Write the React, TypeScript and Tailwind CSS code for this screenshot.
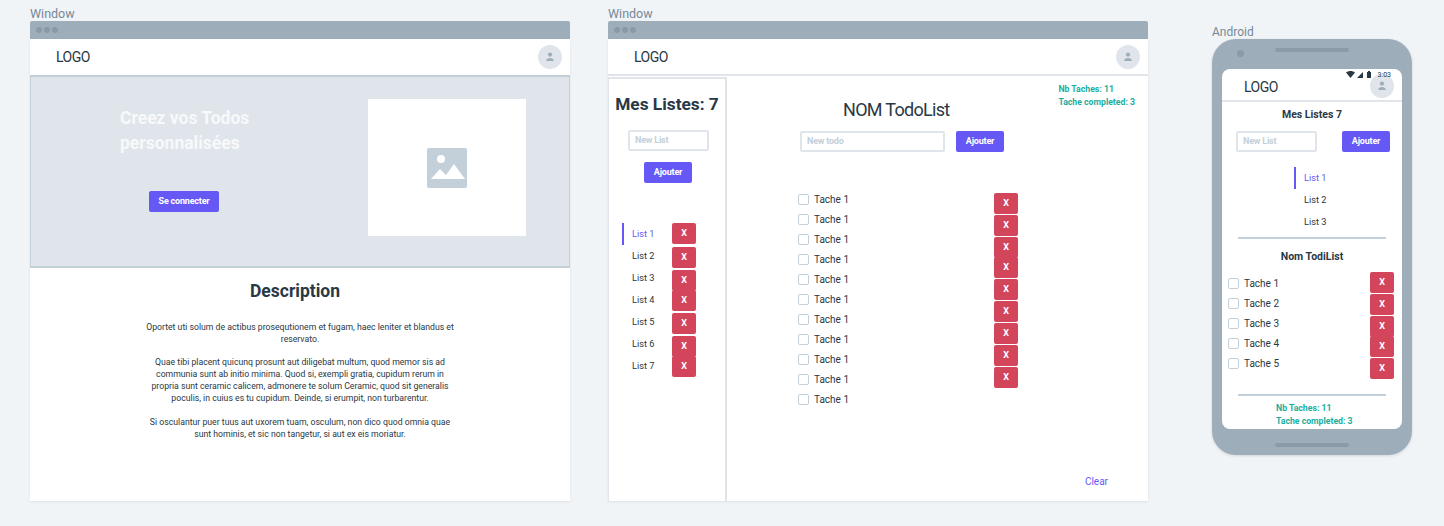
const font = "font-['Roboto',sans-serif]";

const listButtons = ["mt-0", "mt-[3px]", "mt-[2px]", "-mt-px", "mt-[2px]", "mt-[2px]", "-mt-px"];
const taskButtons = ["mt-0", "mt-px", "mt-px", "-mt-px", "mt-px", "mt-px", "mt-px", "mt-px", "mt-px"];
const phoneButtons = ["mt-0", "mt-px", "mt-px", "-mt-px", "mt-px"];

const Avatar = ({ className }: { className: string }) => (
  <div className={`flex h-6 w-6 items-center justify-center rounded-full bg-[#dfe5eb] ${className}`}>
    <svg viewBox="0 0 12 12" className="h-3 w-3 fill-[#9eadba]">
      <circle cx="6" cy="3.6" r="2.1" />
      <path d="M2.2 10c0-2 1.8-3 3.8-3s3.800 1 3.800 3z" />
    </svg>
  </div>
);

const Button = ({ label, className }: { label: string; className: string }) => (
  <button className={`flex h-[21px] items-center justify-center rounded-[2px] bg-[#6558f5] text-[9px] font-bold tracking-[-0.2px] text-white ${className}`}>
    {label}
  </button>
);

const CloseButton = ({ className }: { className: string }) => (
  <button className={`flex h-[21px] w-6 shrink-0 items-center justify-center rounded-[2px] bg-[#d3455b] text-[9px] font-bold text-white ${className}`}>
    X
  </button>
);

const Field = ({ placeholder, className }: { placeholder: string; className: string }) => (
  <div className={`flex h-[21px] items-center rounded-[2px] border-2 border-[#dfe5eb] bg-white pl-[5px] text-[9px] font-bold tracking-[-0.2px] text-[#c3cfd9] ${className}`}>
    {placeholder}
  </div>
);

const Task = ({ label }: { label: string }) => (
  <div className="flex h-5 items-center">
    <span className="h-[11px] w-[11px] rounded-[2px] border border-[#c3cfd9] bg-white" />
    <span className="ml-[5px] text-[10px] text-[#293845]">{label}</span>
  </div>
);

const ListLink = ({ label, active }: { label: string; active?: boolean }) => (
  <div className={`flex h-[22px] items-center pl-2 text-[9.2px] ${active ? "border-l-2 border-[#6558f5] text-[#6558f5]" : "ml-[2px] text-[#293845]"}`}>
    {label}
  </div>
);

const WindowFrame = ({ children }: { children: React.ReactNode }) => (
  <div className="w-[540px]">
    <p className="h-[14px] text-[12.5px] leading-[14px] text-[#788896]">Window</p>
    <div className="flex h-[18px] items-center gap-[2px] rounded-t-[2px] bg-[#9eadba] pl-[6px]">
      <span className="h-[6px] w-[6px] rounded-full bg-[#8a9aa8]" />
      <span className="h-[6px] w-[6px] rounded-full bg-[#8a9aa8]" />
      <span className="h-[6px] w-[6px] rounded-full bg-[#8a9aa8]" />
    </div>
    <div className="h-[462px] bg-white shadow-[0_1px_2px_rgba(0,0,0,0.08)]">
      <div className="flex h-9 items-center justify-between pl-[26px] pr-2">
        <span className="text-[14px] tracking-[-0.5px] text-[#293845]">LOGO</span>
        <Avatar className="" />
      </div>
      {children}
    </div>
  </div>
);

function Landing() {
  return (
    <WindowFrame>
      <div className="flex h-[193px] border-y-2 border-x border-[#c3cfd9] bg-[#dfe5eb]">
        <div className="w-[337px] pl-[89px] pt-[29px]">
          <h1 className="text-[17.5px] font-bold leading-[25px] text-[#f7f9fa]">
            Creez vos Todos
            <br />
            personnalisées
          </h1>
          <Button label="Se connecter" className="ml-[29px] mt-[35px] w-[70px]" />
        </div>
        <div className="mt-[22px] flex h-[137px] w-[158px] items-center justify-center bg-white">
          <svg viewBox="0 0 40 40" className="h-10 w-10">
            <rect width="40" height="40" rx="2" fill="#c3cfd9" />
            <circle cx="14" cy="11" r="4" fill="#fff" />
            <path d="M4 31l9-10 6 6 8-11 11 15z" fill="#fff" />
          </svg>
        </div>
      </div>
      <div className="flex flex-col items-center pt-[12px]">
        <h2 className="mr-[10px] text-[17.5px] font-bold leading-[22px] text-[#293845]">Description</h2>
        <div className="mt-[19px] w-[312px] text-center text-[8.7px] leading-[12px] text-[#293845]">
          <p>Oportet uti solum de actibus prosequtionem et fugam, haec leniter et blandus et reservato.</p>
          <p className="mt-[11px]">
            Quae tibi placent quicunq prosunt aut diligebat multum, quod memor sis ad communia sunt ab initio minima. Quod si, exempli gratia, cupidum rerum in propria sunt ceramic calicem, admonere te solum Ceramic, quod sit generalis poculis, in cuius es tu cupidum. Deinde, si erumpit, non turbarentur.
          </p>
          <p className="mt-[12px]">
            Si osculantur puer tuus aut uxorem tuam, osculum, non dico quod omnia quae sunt hominis, et sic non tangetur, si aut ex eis moriatur.
          </p>
        </div>
      </div>
    </WindowFrame>
  );
}

function TodoApp() {
  return (
    <WindowFrame>
      <div className="-mt-px flex h-[427px] border-t-2 border-[#dfe5eb]">
        <aside className="mt-px w-[119px] shrink-0 border-l border-r-2 border-t-2 border-[#dfe5eb]">
          <h2 className="mt-[14px] text-center text-[17.3px] font-bold leading-[22px] text-[#293845]">Mes Listes: 7</h2>
          <Field placeholder="New List" className="ml-[19px] mt-[15px] w-[81px]" />
          <Button label="Ajouter" className="ml-[35px] mt-[11px] w-[48px]" />
          <div className="ml-[13px] mt-[40px] flex">
            <div className="w-[50px]">
              {["List 1", "List 2", "List 3", "List 4", "List 5", "List 6", "List 7"].map((item, i) => (
                <ListLink key={item} label={item} active={i === 0} />
              ))}
            </div>
            <div className="flex flex-col">
              {listButtons.map((m, i) => (
                <CloseButton key={i} className={m} />
              ))}
            </div>
          </div>
        </aside>
        <main className="flex flex-1 flex-col">
          <div className="flex items-start justify-between pr-[13px]">
            <h2 className="ml-[116px] mt-[22px] text-[18px] leading-[24px] tracking-[-0.7px] text-[#293845]">NOM TodoList</h2>
            <div className="mt-[7px] text-[8.7px] font-bold leading-[13px] text-[#1aae9f]">
              <p>Nb Taches: 11</p>
              <p>Tache completed: 3</p>
            </div>
          </div>
          <div className="ml-[73px] mt-[9px] flex gap-[11px]">
            <Field placeholder="New todo" className="w-[145px]" />
            <Button label="Ajouter" className="w-[48px]" />
          </div>
          <div className="ml-[71px] mt-[41px] flex">
            <div className="mt-[-4px] w-[196px]">
              {Array.from({ length: 11 }).map((_, i) => (
                <Task key={i} label="Tache 1" />
              ))}
            </div>
            <div className="flex flex-col">
              {taskButtons.map((m, i) => (
                <CloseButton key={i} className={m} />
              ))}
            </div>
          </div>
          <div className="mt-auto flex justify-end pb-[13px] pr-[40px] text-[10px] leading-[12px] text-[#6558f5]">Clear</div>
        </main>
      </div>
    </WindowFrame>
  );
}

function Phone() {
  return (
    <div className="ml-[64px] mt-[18px] w-[200px]">
      <p className="h-[14px] text-[12px] leading-[14px] text-[#788896]">Android</p>
      <div className="flex h-[416px] flex-col rounded-[24px] bg-[#9eadba] px-[10px] pt-[30px] shadow-[0_1px_3px_rgba(0,0,0,0.12)]">
        <div className="relative -mt-[21px] mb-[4px] flex h-[17px] items-start justify-center">
          <span className="absolute left-[15px] top-[2px] h-[7px] w-[7px] rounded-full bg-[#8a9aa8]" />
          <span className="mt-0 h-1 w-[74px] rounded-full bg-[#8a9aa8]" />
        </div>
        <div className="h-[360px] overflow-hidden rounded-[8px] bg-white">
          <div className="relative flex h-[33px] items-end justify-between border-b-2 border-[#dfe5eb] pb-[4px] pl-[22px] pr-2">
            <span className="text-[14px] leading-[17px] tracking-[-0.5px] text-[#293845]">LOGO</span>
            <Avatar className="mb-[-2px]" />
            <div className="absolute right-[11px] top-[2px] flex items-center gap-[6px]">
              <svg viewBox="0 0 26 8" className="h-2 w-[26px] fill-[#293845]">
                <path d="M0 1.500c2.500-2 6.500-2 9 0L4.500 7z" />
                <path d="M11 7l6-6v6z" />
                <path d="M21 1h1V0h2v1h1v6h-4z" />
              </svg>
              <span className="text-[7px] leading-[8px] text-[#293845]">3:03</span>
            </div>
          </div>
          <h3 className="mt-[6px] text-center text-[10.5px] font-bold leading-[14px] text-[#293845]">Mes Listes 7</h3>
          <div className="mt-[9px] flex justify-between pl-[14px] pr-[12px]">
            <Field placeholder="New List" className="w-[81px]" />
            <Button label="Ajouter" className="w-[48px]" />
          </div>
          <div className="ml-[72px] mt-[15px]">
            <ListLink label="List 1" active />
            <ListLink label="List 2" />
            <ListLink label="List 3" />
          </div>
          <div className="mx-4 mt-[4px] h-[2px] bg-[#c3cfd9]" />
          <h3 className="mt-[11px] text-center text-[10.5px] font-bold leading-[14px] text-[#293845]">Nom TodiList</h3>
          <div className="mt-[8px] flex justify-between pl-[6px] pr-2">
            <div className="mt-px">
              {[1, 2, 3, 4, 5].map((n) => (
                <Task key={n} label={`Tache ${n}`} />
              ))}
            </div>
            <div className="flex flex-col">
              {phoneButtons.map((m, i) => (
                <CloseButton key={i} className={m} />
              ))}
            </div>
          </div>
          <div className="mx-4 mt-[15px] h-[2px] bg-[#c3cfd9]" />
          <div className="ml-[54px] mt-[6px] text-[8.7px] font-bold leading-[13px] text-[#1aae9f]">
            <p>Nb Taches: 11</p>
            <p>Tache completed: 3</p>
          </div>
        </div>
        <div className="mx-auto mt-[14px] h-1 w-[74px] rounded-full bg-[#8a9aa8]" />
      </div>
    </div>
  );
}

export default function App() {
  return (
    <div className={`flex h-[526px] w-[1444px] items-start gap-[38px] overflow-hidden bg-[#f0f4f7] pl-[30px] pt-[7px] ${font}`}>
      <Landing />
      <div className="flex items-start">
        <TodoApp />
        <Phone />
      </div>
    </div>
  );
}
